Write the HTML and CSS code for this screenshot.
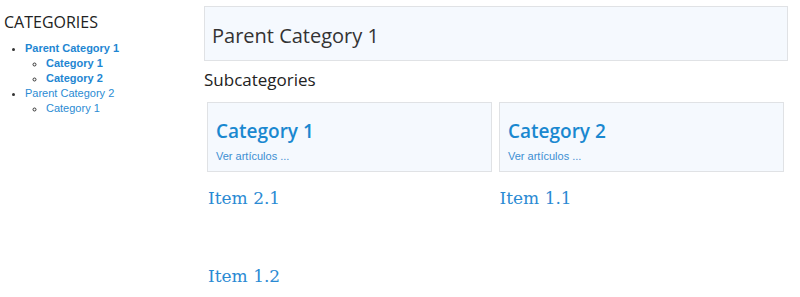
FILE: index.html
```html
<!DOCTYPE html>
<html>
	<head>
		<meta charset="UTF-8">
		<title>Categories</title>
		<link rel="stylesheet" href="styles.css">
	</head>
	<body>
		<div class="page">
			<div class="sidebar">
				<h3 class="side-title">CATEGORIES</h3>
				<ul class="cat-list">
					<li><a class="strong" href="#">Parent Category 1</a>
						<ul class="sub-list">
							<li><a class="strong" href="#">Category 1</a></li>
							<li><a class="strong" href="#">Category 2</a></li>
						</ul>
					</li>
					<li><a href="#">Parent Category 2</a>
						<ul class="sub-list">
							<li><a href="#">Category 1</a></li>
						</ul>
					</li>
				</ul>
			</div>
			<div class="main">
				<div class="page-header">
					<h2>Parent Category 1</h2>
				</div>
				<h3 class="sub-title">Subcategories</h3>
				<div class="cards">
					<div class="card">
						<h3><a href="#">Category 1</a></h3>
						<a class="more" href="#">Ver artículos ...</a>
					</div>
					<div class="card">
						<h3><a href="#">Category 2</a></h3>
						<a class="more" href="#">Ver artículos ...</a>
					</div>
				</div>
				<div class="items">
					<div class="item"><a href="#">Item 2.1</a></div>
					<div class="item"><a href="#">Item 1.1</a></div>
					<div class="item"><a href="#">Item 1.2</a></div>
				</div>
			</div>
		</div>
	</body>
</html>
```
FILE: styles.css
```css
body,div,h2,h3,ul{
	margin: 0;
	padding: 0;
}
body{
	font-family: "Liberation Sans", Arial, sans-serif;
	font-size: 11px;
	color: #333;
	background: #fff;
	overflow: hidden;
}
a{
	text-decoration: none;
	color: #2b8bd3;
}

.page{
	display: flex;
	padding-top: 6px;
}
.sidebar{
	width: 204px;
	flex: none;
}
.side-title{
	font-family: "Open Sans", sans-serif;
	font-size: 16px;
	font-weight: normal;
	color: #222;
	margin: 6px 0 9px 4px;
	line-height: 20px;
}
.cat-list{
	padding-left: 25px;
	line-height: 15px;
}
.cat-list li{
	list-style: disc;
}
.cat-list .sub-list{
	padding-left: 21px;
}
.cat-list .sub-list li{
	list-style: circle;
}
.strong{
	font-weight: bold;
	color: #1e86d2;
}

.main{
	width: 584px;
	flex: none;
}
.page-header{
	height: 53px;
	border: 1px solid #e0e2e5;
	background: #f5f9fe;
	display: flex;
	align-items: center;
	padding-left: 7px;
}
.page-header h2{
	font-family: "Open Sans", sans-serif;
	font-size: 20px;
	font-weight: 500;
	color: #333;
	padding-top: 3px;
}
.sub-title{
	font-family: "Open Sans", sans-serif;
	font-size: 17px;
	font-weight: normal;
	color: #222;
	margin: 8px 0 0 0;
	line-height: 22px;
}
.cards{
	display: grid;
	grid-template-columns: 1fr 1fr;
	column-gap: 7px;
	padding: 0 4px 0 3px;
	margin-top: 11px;
}
.card{
	height: 68px;
	border: 1px solid #e0e2e5;
	background: #f5f9fe;
	padding: 0 8px;
}
.card h3{
	font-family: "Open Sans", sans-serif;
	font-size: 19px;
	font-weight: 600;
	margin-top: 16px;
	line-height: 24px;
}
.card h3 a{
	color: #1a88d0;
}
.card .more{
	display: block;
	font-size: 11px;
	color: #3d8fd2;
	margin-top: 7px;
}
.items{
	display: grid;
	grid-template-columns: 1fr 1fr;
	column-gap: 7px;
	row-gap: 56px;
	padding: 0 4px 0 4px;
	margin-top: 15px;
}
.item{
	font-family: "DejaVu Serif", serif;
	font-size: 17px;
	line-height: 22px;
}
.item a{
	color: #2a8ad3;
}
```
